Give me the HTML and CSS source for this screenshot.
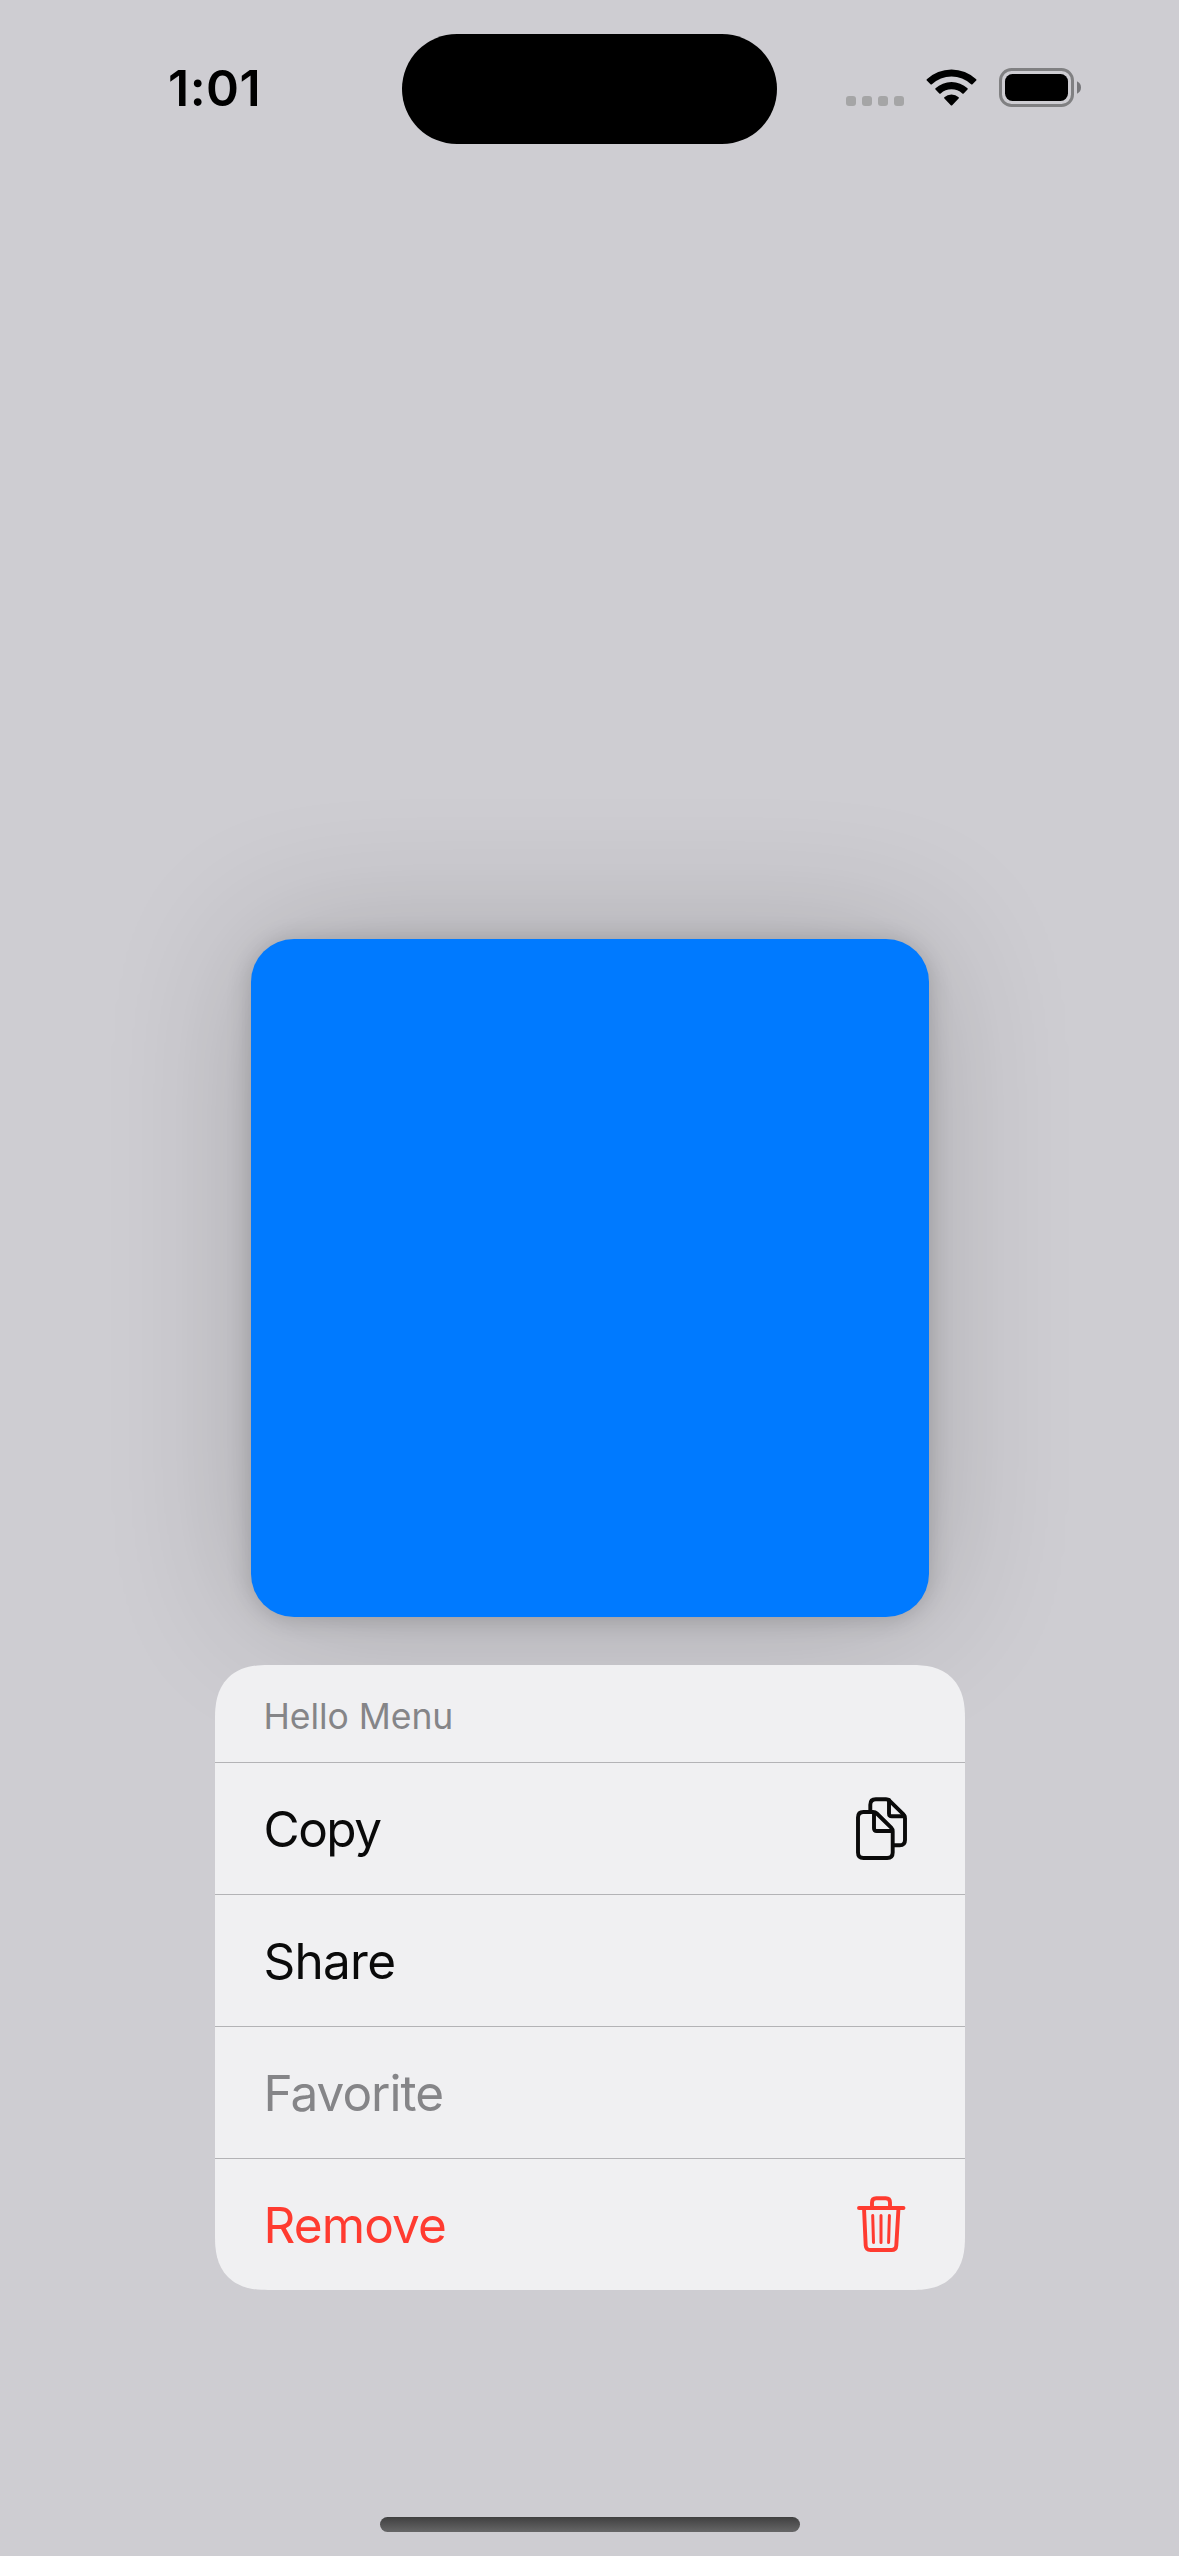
FILE: index.html
```html
<!DOCTYPE html>
<html lang="en">
<head>
<meta charset="utf-8">
<title>Context Menu</title>
<link rel="stylesheet" href="styles.css">
</head>
<body>
<div class="screen">
  <header class="status">
    <time class="clock">1:01</time>
    <div class="island"></div>
    <div class="indicators">
      <div class="signal"><i></i><i></i><i></i><i></i></div>
      <svg class="wifi" viewBox="0 0 51 37" width="51" height="37">
        <path d="M0.800 10.200 A36 36 0 0 1 50.200 10.200 Q50.800 11 50.200 11.600 L46.500 15.200 Q45.800 15.800 45.100 15.200 A28.500 28.500 0 0 0 5.900 15.200 Q5.200 15.800 4.500 15.200 L0.800 11.600 Q0.200 11 0.800 10.200 Z"/>
        <path d="M9.500 19.300 A23.500 23.500 0 0 1 41.500 19.300 Q42.100 20 41.500 20.600 L37.700 24.400 Q37 25 36.300 24.400 A16 16 0 0 0 14.700 24.400 Q14 25 13.300 24.400 L9.500 20.600 Q8.900 20 9.500 19.300 Z"/>
        <path d="M18.300 28.300 A11 11 0 0 1 32.700 28.300 Q33.200 29 32.600 29.600 L26.200 36.200 Q25.500 36.900 24.800 36.200 L18.400 29.600 Q17.800 29 18.300 28.300 Z"/>
      </svg>
      <svg class="battery" viewBox="0 0 83 39" width="83" height="39">
        <rect class="battery-shell" x="1.500" y="1.500" width="72" height="36" rx="11"/>
        <rect x="6" y="6" width="63" height="27" rx="7.500"/>
        <path class="battery-cap" d="M78 13.300 Q82 15.300 82 19.500 Q82 23.700 78 25.700 Z"/>
      </svg>
    </div>
  </header>

  <main class="content">
    <div class="preview"></div>
    <div class="menu" role="menu">
      <div class="menu-title">Hello Menu</div>
      <div class="item" role="menuitem">
        <span class="copy">Copy</span>
        <svg class="icon" viewBox="0 0 51 63" width="51" height="63">
          <path d="M14.300 14 V7.700 Q14.300 2.200 19.800 2.200 H30 Q32 2.200 33.400 3.600 L47.500 17.300 Q49 18.800 49 21 V43 Q49 48.300 43.700 48.300 H38"/>
          <path d="M33 3 V16.500 Q33 19.300 35.800 19.300 H48.500"/>
          <path d="M7.500 15 H17 Q19.300 15 20.800 16.500 L35.200 30.700 Q36.700 32.200 36.700 34.300 V55.500 Q36.700 61 31.200 61 H7.500 Q2 61 2 55.500 V20.500 Q2 15 7.500 15 Z"/>
          <path d="M18 16 V31.200 Q18 34 20.800 34 H36"/>
        </svg>
      </div>
      <div class="item" role="menuitem"><span class="share">Share</span></div>
      <div class="item disabled" role="menuitem"><span class="favorite">Favorite</span></div>
      <div class="item destructive" role="menuitem">
        <span class="remove">Remove</span>
        <svg class="icon trash" viewBox="0 0 49 57" width="49" height="57">
          <path d="M2 12 H46.500"/>
          <path d="M15 12 V6.500 Q15 2.200 19.300 2.200 H28.700 Q33 2.200 33 6.500 V12"/>
          <path d="M7 12 L8.700 49.500 Q9 54 13.500 54 H34.500 Q39 54 39.300 49.500 L41.500 12"/>
          <path class="thin" d="M15.700 19.500 L16.500 46.500 M24 19.500 V46.500 M32.400 19.500 L31.600 46.500"/>
        </svg>
      </div>
    </div>
  </main>

  <div class="home"></div>
</div>
</body>
</html>
```
FILE: styles.css
```css
* { box-sizing: border-box; }

body {
  margin: 0;
  background: #cecdd2;
  font-family: Inter, "Liberation Sans", sans-serif;
}

.screen {
  width: 1179px;
  height: 2556px;
  display: flex;
  flex-direction: column;
  align-items: center;
  overflow: hidden;
  background: #cecdd2;
}

.status {
  width: 100%;
  height: 177px;
  flex: none;
  display: grid;
  grid-template-columns: 402px 375px 1fr;
  padding-top: 34px;
}

.clock {
  padding-left: 168px;
  height: 110px;
  line-height: 108px;
  font-size: 50px;
  font-weight: 600;
  letter-spacing: 0.500px;
}

.island {
  height: 110px;
  border-radius: 55px;
  background: #000;
}

.indicators {
  display: flex;
  align-items: flex-start;
  padding: 34px 0 0 69px;
}

.signal {
  display: flex;
  gap: 6px;
  padding-top: 28px;
}

.signal i {
  width: 10px;
  height: 10px;
  border-radius: 3px;
  background: #a5a5a6;
}

.wifi { margin: 1px 22px 0 22px; }

.battery-shell {
  fill: none;
  stroke: #808082;
  stroke-width: 3;
}

.battery-cap { fill: #77777a; }

.content {
  width: 750px;
  flex: 1;
  display: flex;
  flex-direction: column;
  align-items: center;
  gap: 48px;
  padding-top: 762px;
}

.preview {
  width: 678px;
  height: 678px;
  flex: none;
  border-radius: 43px;
  background: #007aff;
  box-shadow: 0 2px 24px rgba(0, 0, 0, 0.18), 0 0 145px rgba(0, 0, 0, 0.19);
}

.menu {
  width: 750px;
  position: relative;
  border-radius: 42px;
  background: #f0f0f2;
  color: #0a0a0a;
}

@supports (corner-shape: superellipse(1.3)) {
  .menu {
    border-radius: 53px;
    corner-shape: superellipse(1.3);
  }
}

.menu-title {
  height: 97px;
  padding-left: 49px;
  line-height: 103px;
  font-size: 35.500px;
  letter-spacing: -0.050px;
  color: #858588;
}

.item {
  height: 132px;
  display: flex;
  align-items: center;
  justify-content: space-between;
  padding: 0 58px 0 49px;
  border-top: 1px solid #b3b3b6;
  font-size: 49.500px;
  letter-spacing: -1px;
}

.copy { letter-spacing: -1.500px; }
.share { letter-spacing: -0.750px; }
.remove { letter-spacing: -0.900px; }

.disabled { color: #858588; }
.destructive { color: #ff3b30; }

.icon {
  fill: none;
  stroke: currentColor;
  stroke-width: 3.900;
  stroke-linecap: round;
  stroke-linejoin: round;
}

.trash { margin-right: 1px; }
.thin { stroke-width: 3; }

.home {
  width: 420px;
  height: 15px;
  flex: none;
  margin-bottom: 24px;
  border-radius: 7.500px;
  background: linear-gradient(#404040, #666667);
}
```
